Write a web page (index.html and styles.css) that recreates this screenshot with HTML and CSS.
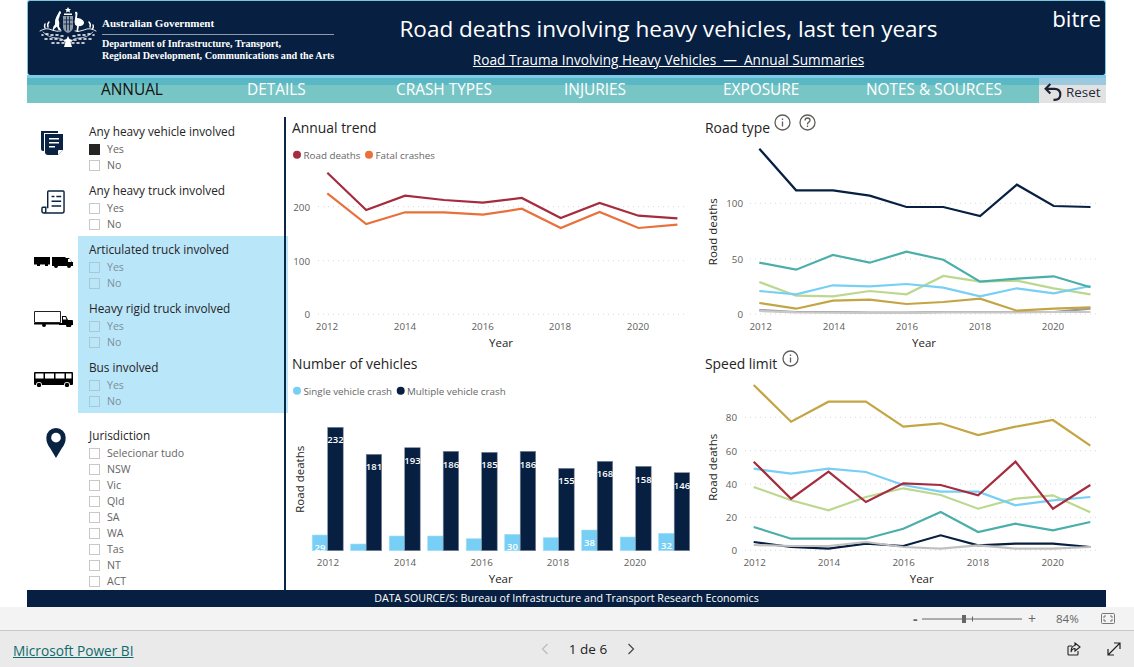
FILE: index.html
```html
<!DOCTYPE html>
<html lang="en">
<head>
<meta charset="utf-8">
<title>Road deaths involving heavy vehicles</title>
<link rel="stylesheet" href="styles.css">
</head>
<body>
<main class="canvas">
  <header class="banner">
    <div class="gov">
      <svg class="crest" viewBox="0 0 58 44" width="58" height="44">
        <g fill="#fff">
          <path d="M29 0l1 2h2l-1.500 1.500l.5 2l-2-1l-2 1l.5-2L26 2h2z"/>
          <path d="M25 6.500h8v1.500h-8z"/>
          <path d="M24 9h10v11q0 4-5 6q-5-2-5-6z" fill-opacity=".55"/>
          <path d="M24.500 13h9M24.500 17h9M27.500 9.500v14M30.500 9.500v14" stroke="#071f41" stroke-width=".8" fill="none"/>
          <path d="M20.500 4q1.500 0 1.500 1.500q0 1.500-1 2q-.5 3-1.500 5q1.500 4 .5 7l2.500 4l-3-.5l-1.500-3.500q-3 2-4 5q-1-4 2-7q-.5-5 1.500-8z"/>
          <path d="M36 5q2-1 2.500 1l-.5 5q4 0 6.500 3q1.500 2-.5 4q-2 1.500-4 1l-1 5l1.500 1h-3l.5-6q-2.500-1-2.500-4l1-7z"/>
        </g>
        <g fill="none" stroke="#fff" stroke-linecap="round">
          <path d="M6 17q-1 2 0 4M10 15q-2 2-1 5M50 15q2 2 1 5M54 18q1 2-.500 4" stroke-width="1.500"/>
          <path d="M1 24q6-4 12-1q5 2 9 1M57 24q-6-4-12-1q-5 2-9 1" stroke-width=".9"/>
          <path d="M3 28h1M7 27h2M12 28h2M17 28h2M22 29h2M34 29h2M39 28h2M44 28h2M49 27h2M54 28h1M6 32h2M11 32h2M16 32h2M21 33h2M35 33h2M40 32h2M45 32h2M50 32h2M13 36h2M18 36h2M23 36h2M33 36h2M38 36h2M43 36h2" stroke-width="1.600"/>
          <path d="M4 25q6 6 14 6q6 0 8 4M54 25q-6 6-14 6q-6 0-8 4" stroke-width=".7"/>
        </g>
        <path d="M29 29l1.500 3l3 1l-2 2l1.500 5h-8l1.500-5l-2-2l3-1z" fill="#fff"/>
      </svg>
      <div class="gov-text">
        <div class="gov-name">Australian Government</div>
        <div class="gov-dept">Department of Infrastructure, Transport,<br>Regional Development, Communications and the Arts</div>
      </div>
    </div>
    <div class="heading">
      <h1>Road deaths involving heavy vehicles, last ten years</h1>
      <p class="subtitle">Road Trauma Involving Heavy Vehicles &nbsp;—&nbsp; Annual Summaries</p>
    </div>
    <div class="brand">bitre</div>
  </header>

  <nav class="nav">
    <div class="tabs">
      <span class="tab tab-active">ANNUAL</span>
      <span class="tab">DETAILS</span>
      <span class="tab">CRASH TYPES</span>
      <span class="tab">INJURIES</span>
      <span class="tab">EXPOSURE</span>
      <span class="tab">NOTES &amp; SOURCES</span>
    </div>
    <div class="reset">
      <svg viewBox="0 0 20 20" width="21" height="21" class="reset-icon"><path d="M7 2L2.500 6.500L7 11M3 6.500H11Q16.500 6.500 16.500 12Q16.500 17 11 17H10" fill="none" stroke="#1a2233" stroke-width="2"/></svg>
      <span class="reset-label">Reset</span>
    </div>
  </nav>

  <div class="body">
    <aside class="sidebar">
      <section class="group">
        <div class="icon-cell icon-doc">
          <svg viewBox="0 0 24 26" width="24" height="26"><path d="M1 1h17v2H4v18H3q-2 0-2-2z" fill="#0a2343"/><path d="M5 4h18v16l-5 5H8q-3 0-3-3z" fill="#0a2343"/><path d="M9 8h10v1.500H9zM9 12h10v1.500H9zM9 16h6v1.500H9z" fill="#fff"/><path d="M18 25v-4q0-1 1-1h4z" fill="#fff"/></svg>
        </div>
        <div class="slicer">
          <div class="slicer-title">Any heavy vehicle involved</div>
          <div class="opt"><i class="box box-on"></i>Yes</div>
          <div class="opt"><i class="box"></i>No</div>
        </div>
      </section>
      <section class="group">
        <div class="icon-cell icon-paper">
          <svg viewBox="0 0 25 25" width="24" height="24"><path d="M7 19V2q0-1 1-1h15q1 0 1 1v20q0 2-2 2H3q-2 0-2-2v-3q0-1 1-1h3v4q0 2-2 2" fill="none" stroke="#0a2343" stroke-width="1.500"/><path d="M11 6h3v1.500h-3zM16 6h5v1.500h-5zM11 11h10v1.500H11zM11 16h10v1.500H11z" fill="#0a2343"/></svg>
        </div>
        <div class="slicer">
          <div class="slicer-title">Any heavy truck involved</div>
          <div class="opt"><i class="box"></i>Yes</div>
          <div class="opt"><i class="box"></i>No</div>
        </div>
      </section>
      <section class="group group-first">
        <div class="icon-cell icon-road">
          <svg viewBox="0 0 39 11" width="39" height="11"><path d="M0 0h16v7.500H14v1.500h-3v-1.500H6v1.500H3v-1.500H0zM18 0h13l1 1h3l3 4h1v4h-2a2 2 0 0 1-4 0H24a2 2 0 0 1-4 0h-2z"/><path d="M34 2h2l1.500 3H34z" fill="#fff"/></svg>
        </div>
        <div class="slicer slicer-hl">
          <div class="slicer-title">Articulated truck involved</div>
          <div class="opt"><i class="box"></i>Yes</div>
          <div class="opt"><i class="box"></i>No</div>
        </div>
      </section>
      <section class="group">
        <div class="icon-cell icon-road-2">
          <svg viewBox="0 0 39 16" width="39" height="16"><path d="M.500.500h26v11H.500z" fill="#fff" stroke="#222"/><path d="M0 12h25v1.500H0z"/><path d="M28 5h4l2 4h4q1 0 1 1v4h-2a2.500 2.500 0 0 1-5 0H25v-2h3z"/><circle cx="10" cy="14" r="2"/><circle cx="35.500" cy="14" r="2"/><path d="M29 6h2.500l1 2.500H29z" fill="#fff"/></svg>
        </div>
        <div class="slicer slicer-hl">
          <div class="slicer-title">Heavy rigid truck involved</div>
          <div class="opt"><i class="box"></i>Yes</div>
          <div class="opt"><i class="box"></i>No</div>
        </div>
      </section>
      <section class="group group-last">
        <div class="icon-cell icon-road-3">
          <svg viewBox="0 0 39 15" width="39" height="15"><path d="M1 0h37q1 0 1 1v11q0 1-1 1h-2a3 3 0 0 0-6 0H8a3 3 0 0 0-6 0H1q-1 0-1-1V1q0-1 1-1z"/><path d="M1.500 1.500h8v5h-8zM11 1.500h9v5h-9zM21.500 1.500h9v5h-9zM32 1.500h5.500v5H32z" fill="#fff"/><circle cx="5" cy="13" r="2.200"/><circle cx="33" cy="13" r="2.200"/></svg>
        </div>
        <div class="slicer slicer-hl">
          <div class="slicer-title">Bus involved</div>
          <div class="opt"><i class="box"></i>Yes</div>
          <div class="opt"><i class="box"></i>No</div>
        </div>
      </section>
      <section class="group group-juris">
        <div class="icon-cell icon-pin">
          <svg viewBox="0 0 20 31" width="20" height="30"><path d="M10 0a10 10 0 0 1 10 10q0 6-4 11l-6 10l-6-10q-4-5-4-11a10 10 0 0 1 10-10z" fill="#0a2343"/><circle cx="10" cy="10" r="5" fill="#fff"/></svg>
        </div>
        <div class="slicer">
          <div class="slicer-title">Jurisdiction</div>
          <div class="opt"><i class="box"></i>Selecionar tudo</div>
          <div class="opt"><i class="box"></i>NSW</div>
          <div class="opt"><i class="box"></i>Vic</div>
          <div class="opt"><i class="box"></i>Qld</div>
          <div class="opt"><i class="box"></i>SA</div>
          <div class="opt"><i class="box"></i>WA</div>
          <div class="opt"><i class="box"></i>Tas</div>
          <div class="opt"><i class="box"></i>NT</div>
          <div class="opt"><i class="box"></i>ACT</div>
        </div>
      </section>
    </aside>

    <div class="charts">
      <section class="chart">
        <h2 class="chart-title">Annual trend</h2>
        <svg class="plot" viewBox="288 139 413 214" width="413" height="214">
          <circle cx="297" cy="154.700" r="4" fill="#a52c3e"/><text class="legend" x="303.500" y="155">Road deaths</text>
          <circle cx="369" cy="154.700" r="4" fill="#e8703a"/><text class="legend" x="375.500" y="155">Fatal crashes</text>
          <path class="grid" d="M318 206.700H684M318 260.700H684M318 314.300H684"/>
          <text class="axis end" x="310" y="207">200</text><text class="axis end" x="310" y="261">100</text><text class="axis end" x="310" y="314.500">0</text>
          <polyline class="line" stroke="#a52c3e" points="327.300,172.700 366.200,210 405.100,195.700 444,200 482.900,202.700 521.800,198 560.700,218 599.600,203 638.500,215.700 677.400,218.300"/>
          <polyline class="line" stroke="#e8703a" points="327.300,193.300 366.200,224 405.100,212.300 444,212.300 482.900,214.700 521.800,208.700 560.700,228 599.600,212 638.500,228 677.400,224.700"/>
          <text class="axis mid" x="327" y="326">2012</text><text class="axis mid" x="405" y="326">2014</text><text class="axis mid" x="482.700" y="326">2016</text><text class="axis mid" x="560" y="326">2018</text><text class="axis mid" x="638" y="326">2020</text>
          <text class="axis-title mid" x="501" y="342">Year</text>
        </svg>
      </section>

      <section class="chart chart-right">
        <h2 class="chart-title">Road type
          <svg class="help help-first" viewBox="0 0 17 17" width="17" height="17"><circle cx="8.500" cy="8.500" r="7.500"/><path d="M8.500 7.500V12.500M8.500 4.500V6"/></svg>
          <svg class="help help-next" viewBox="0 0 17 17" width="17" height="17"><circle cx="8.500" cy="8.500" r="7.500"/><path d="M6 6.500Q6.200 4 8.500 4Q11 4 11 6.200Q11 7.600 9.500 8.300Q8.500 8.800 8.500 10.500M8.500 11.500V13"/></svg>
        </h2>
        <svg class="plot" viewBox="701 139 405 214" width="405" height="214">
          <path class="grid" d="M750 203.300H1097M750 259H1097M750 314H1097"/>
          <text class="axis end" x="743" y="203.500">100</text><text class="axis end" x="743" y="259.500">50</text><text class="axis end" x="743" y="314.500">0</text>
          <text class="axis-title mid" transform="translate(712 231.700) rotate(-90)">Road deaths</text>
          <polyline class="line" stroke="#999" points="759.300,310 796.100,312 832.900,312 869.700,312.700 906.500,312.700 943.300,312 980.100,312 1016.900,312 1053.700,312 1090.500,308.700"/>
          <polyline class="line" stroke="#c8c8c8" points="759.300,311 796.100,312.300 832.900,312.700 869.700,313 906.500,313 943.300,312.300 980.100,312.300 1016.900,312.300 1053.700,312 1090.500,312"/>
          <polyline class="line" stroke="#c4a544" points="759.300,303 796.100,308.700 832.900,300.700 869.700,299.700 906.500,304 943.300,302 980.100,298.700 1016.900,310.700 1053.700,308.700 1090.500,307.300"/>
          <polyline class="line" stroke="#bcd88e" points="759.300,282 796.100,295.700 832.900,296.300 869.700,291 906.500,294.300 943.300,276 980.100,281.700 1016.900,280.700 1053.700,288.300 1090.500,294.300"/>
          <polyline class="line" stroke="#77cff5" points="759.300,291 796.100,294.300 832.900,285.300 869.700,286.300 906.500,284 943.300,287.700 980.100,296.300 1016.900,288.300 1053.700,293.300 1090.500,286"/>
          <polyline class="line" stroke="#4aafa9" points="759.300,262.700 796.100,269.700 832.900,255 869.700,262.700 906.500,251.700 943.300,259.700 980.100,281.700 1016.900,278.700 1053.700,276.300 1090.500,287.300"/>
          <polyline class="line" stroke="#071f41" points="759.300,148.700 796.100,190.300 832.900,190.300 869.700,195.700 906.500,207 943.300,207 980.100,216 1016.900,184.700 1053.700,206 1090.500,207"/>
          <text class="axis mid" x="760.700" y="326">2012</text><text class="axis mid" x="834" y="326">2014</text><text class="axis mid" x="907" y="326">2016</text><text class="axis mid" x="980" y="326">2018</text><text class="axis mid" x="1053" y="326">2020</text>
          <text class="axis-title mid" x="924" y="342">Year</text>
        </svg>
      </section>

      <section class="chart">
        <h2 class="chart-title">Number of vehicles</h2>
        <svg class="plot" viewBox="288 375 413 215" width="413" height="215">
          <circle cx="297" cy="390.700" r="4" fill="#77cff5"/><text class="legend" x="303.500" y="391">Single vehicle crash</text>
          <circle cx="400.700" cy="390.700" r="4" fill="#071f41"/><text class="legend" x="407" y="391">Multiple vehicle crash</text>
          <text class="axis-title mid" transform="translate(299 479.300) rotate(-90)">Road deaths</text>
          <g class="bars-light">
            <rect x="312.200" y="535" width="15.500" height="15.700"/><rect x="350.700" y="544" width="15.500" height="6.700"/><rect x="389.200" y="536" width="15.500" height="14.700"/><rect x="427.700" y="536" width="15.500" height="14.700"/><rect x="466.200" y="538.700" width="15.500" height="12"/><rect x="504.700" y="534.300" width="15.500" height="16.400"/><rect x="543.200" y="537.700" width="15.500" height="13"/><rect x="581.700" y="530" width="15.500" height="20.700"/><rect x="620.200" y="537" width="15.500" height="13.700"/><rect x="658.700" y="533.300" width="15.500" height="17.400"/>
          </g>
          <g class="bars-dark">
            <rect x="327.700" y="427.300" width="15.500" height="123.400"/><rect x="366.200" y="454.300" width="15.500" height="96.400"/><rect x="404.700" y="447.700" width="15.500" height="103"/><rect x="443.200" y="451.300" width="15.500" height="99.400"/><rect x="481.700" y="452.300" width="15.500" height="98.400"/><rect x="520.200" y="451.300" width="15.500" height="99.400"/><rect x="558.700" y="468.300" width="15.500" height="82.400"/><rect x="597.200" y="461.300" width="15.500" height="89.400"/><rect x="635.700" y="466.300" width="15.500" height="84.400"/><rect x="674.200" y="472.700" width="15.500" height="78"/>
          </g>
          <g class="bar-label">
            <text x="335.500" y="439">232</text><text x="374" y="466">181</text><text x="412.500" y="460">193</text><text x="451" y="464">186</text><text x="489.500" y="464">185</text><text x="528" y="464">186</text><text x="566.500" y="480">155</text><text x="605" y="473">168</text><text x="643.500" y="479">158</text><text x="682" y="485">146</text>
            <text x="320" y="547">29</text><text x="512.500" y="546">30</text><text x="589.500" y="542">38</text><text x="666.500" y="545">32</text>
          </g>
          <text class="axis mid" x="328" y="562">2012</text><text class="axis mid" x="405" y="562">2014</text><text class="axis mid" x="481.700" y="562">2016</text><text class="axis mid" x="558" y="562">2018</text><text class="axis mid" x="635" y="562">2020</text>
          <text class="axis-title mid" x="500.700" y="578">Year</text>
        </svg>
      </section>

      <section class="chart chart-right">
        <h2 class="chart-title">Speed limit
          <svg class="help help-first help-wide" viewBox="0 0 17 17" width="17" height="17"><circle cx="8.500" cy="8.500" r="7.500"/><path d="M8.500 7.500V12.500M8.500 4.500V6"/></svg>
        </h2>
        <svg class="plot" viewBox="701 375 405 215" width="405" height="215">
          <path class="grid" d="M745 417.300H1097M745 450.700H1097M745 484H1097M745 517.300H1097M745 550.300H1097"/>
          <text class="axis end" x="737" y="417.500">80</text><text class="axis end" x="737" y="451">60</text><text class="axis end" x="737" y="484.500">40</text><text class="axis end" x="737" y="517.500">20</text><text class="axis end" x="737" y="550.500">0</text>
          <text class="axis-title mid" transform="translate(712 467.300) rotate(-90)">Road deaths</text>
          <polyline class="line" stroke="#071f41" points="753.700,542 791.100,547 828.500,548.700 865.900,543.700 903.300,546 940.700,535.300 978.100,545.300 1015.500,543.700 1052.900,543.700 1090.300,547"/>
          <polyline class="line" stroke="#c0c0c0" points="753.700,545 791.100,546 828.500,546 865.900,542 903.300,547 940.700,548.700 978.100,545.300 1015.500,548.700 1052.900,548.700 1090.300,547"/>
          <polyline class="line" stroke="#4aafa9" points="753.700,527 791.100,538.700 828.500,538.700 865.900,538.700 903.300,528.700 940.700,512 978.100,532 1015.500,523.700 1052.900,530.300 1090.300,522"/>
          <polyline class="line" stroke="#bcd88e" points="753.700,487 791.100,500.300 828.500,510.300 865.900,497 903.300,488.300 940.700,495 978.100,508.700 1015.500,498.700 1052.900,495.300 1090.300,512.300"/>
          <polyline class="line" stroke="#77cff5" points="753.700,468.700 791.100,473.700 828.500,468.700 865.900,472 903.300,485 940.700,491.700 978.100,491.700 1015.500,505.300 1052.900,500.300 1090.300,497"/>
          <polyline class="line" stroke="#a52c3e" points="753.700,461.700 791.100,498.700 828.500,471.700 865.900,502 903.300,483.300 940.700,485 978.100,495.300 1015.500,461.700 1052.900,508.700 1090.300,485"/>
          <polyline class="line" stroke="#c4a544" points="753.700,385 791.100,421.700 828.500,401.700 865.900,401.700 903.300,426.700 940.700,423.300 978.100,435 1015.500,426.700 1052.900,420 1090.300,445.700"/>
          <text class="axis mid" x="754.700" y="562">2012</text><text class="axis mid" x="829" y="562">2014</text><text class="axis mid" x="903.700" y="562">2016</text><text class="axis mid" x="978" y="562">2018</text><text class="axis mid" x="1052.700" y="562">2020</text>
          <text class="axis-title mid" x="921.700" y="578">Year</text>
        </svg>
      </section>
    </div>
  </div>

  <div class="source">DATA SOURCE/S: Bureau of Infrastructure and Transport Research Economics</div>
</main>

<div class="zoombar">
  <span class="zoom-minus">-</span>
  <svg class="zoom-slider" viewBox="0 0 100 10" width="100" height="10"><path d="M0 5H100" stroke="#666"/><path d="M50.500 2.500V7.500" stroke="#666"/><rect x="40" y="1" width="4" height="8" fill="#666"/></svg>
  <span class="zoom-plus">+</span>
  <span class="zoom-value">84%</span>
  <svg class="zoom-fit" viewBox="0 0 14 11" width="14" height="11"><rect x=".500" y=".500" width="13" height="10" rx="1" fill="none" stroke="#777"/><path d="M3 5V3H5M9 3H11V5M11 6V8H9M5 8H3V6" fill="none" stroke="#777"/></svg>
</div>

<footer class="footer">
  <a class="pbi">Microsoft Power BI</a>
  <div class="pager">
    <svg viewBox="0 0 8 12" width="8" height="12"><path d="M6.500 1L1.500 6L6.500 11" fill="none" stroke="#bbb" stroke-width="1.200"/></svg>
    <span class="pager-text">1 de 6</span>
    <svg viewBox="0 0 8 12" width="8" height="12"><path d="M1.500 1L6.500 6L1.500 11" fill="none" stroke="#444" stroke-width="1.200"/></svg>
  </div>
  <div class="foot-actions">
    <svg viewBox="0 0 14 14" width="14" height="14"><path d="M11 9v3q0 1-1 1H2q-1 0-1-1V5q0-1 1-1h3M8 1l5 4l-5 4V6.500Q5 6.500 4 10Q4 4 8 3.500z" fill="none" stroke="#222" stroke-width="1.100"/></svg>
    <svg viewBox="0 0 14 14" width="14" height="14"><path d="M1 13L13 1M7 1H13V7M1 7V13H7" fill="none" stroke="#222" stroke-width="1.200"/></svg>
  </div>
</footer>
</body>
</html>
```
FILE: styles.css
```css
* { box-sizing: border-box; }
html, body { margin: 0; padding: 0; }
body {
  width: 1134px;
  height: 667px;
  overflow: hidden;
  background: #fff;
  font-family: "Open Sans", "Noto Sans", sans-serif;
  color: #222;
}

.canvas {
  height: 607px;
  padding: 0 28px 0 27px;
  display: flex;
  flex-direction: column;
}

/* banner */
.banner {
  height: 75px;
  background: #071f41;
  border-top: 1px solid #7cc7dc;
  border-right: 1px solid #7cc7dc;
  border-left: 1px solid #7cc7dc;
  border-radius: 3px;
  display: grid;
  grid-template-columns: 344px 1fr 140px;
  color: #fff;
}
.gov { display: flex; padding: 6px 0 0 11px; }
.crest { flex: none; }
.gov-text { margin-left: 5px; padding-top: 9px; font-family: "Liberation Serif", serif; font-weight: 700; width: 232px; }
.gov-name { font-size: 11px; line-height: 15px; padding-bottom: 3px; border-bottom: 1px solid #8c9ab0; }
.gov-dept { font-size: 10.150px; line-height: 12px; padding-top: 3px; white-space: nowrap; }
.heading { text-align: center; white-space: nowrap; }
.heading h1 { margin: 11px 0 0; font-size: 22.550px; line-height: 34px; font-weight: 400; }
.subtitle { margin: 4px 0 0; font-size: 13.650px; line-height: 20px; text-decoration: underline; }
.brand { text-align: right; padding: 2px 4px 0 0; font-size: 22.300px; line-height: 32px; }

/* nav */
.nav {
  height: 28px;
  display: flex;
  border-top: 3px solid #7ccbe8;
  background: linear-gradient(#5ab8c5 0 7px, #78c5c6 7px);
}
.tabs {
  width: 1012px;
  display: grid;
  grid-template-columns: 146px 149px 168px 159px 143px 1fr;
  padding: 0 0 0 74px;
  font-size: 15.400px;
  line-height: 24px;
  color: #fff;
  white-space: nowrap;
}
.tab-active { color: #111; }
.reset {
  width: 67px;
  display: flex;
  align-items: flex-end;
  background: linear-gradient(#9cc9dd 0 7px, #e2e2e2 7px);
  font-size: 13.400px;
  line-height: 20px;
  color: #222a3a;
  padding: 0 0 0 4px;
  gap: 2px;
}
.reset-icon { margin-bottom: 0; }
.reset-label { margin-bottom: 1px; }

/* body */
.body { flex: 1; display: flex; min-height: 0; }

.sidebar { position: relative; width: 261px; flex: none; padding-top: 19px; overflow: hidden; }
.sidebar::after {
  content: "";
  position: absolute;
  top: 14px;
  bottom: 0;
  right: 2px;
  width: 2px;
  background: #0d2748;
}
.group { display: flex; }
.icon-cell { width: 51px; flex: none; display: flex; justify-content: center; align-items: flex-start; }
.icon-doc { padding: 8px 1px 0 0; }
.icon-paper { padding: 9px 0 0 0; }
.icon-road { padding: 19px 0 0 1px; }
.icon-road-2 { padding: 12px 0 0 1px; }
.icon-road-3 { padding: 14px 0 0 1px; }
.icon-pin { padding: 2px 0 0 6px; }
.slicer { flex: 1; padding: 0 0 8px 11px; }
.slicer-hl { background: #bae6fa; }
.group-first .slicer { padding-top: 4px; }
.group-first .icon-road { padding-top: 21px; }
.group-first { margin-top: -4px; }
.group-last .slicer { padding-bottom: 4px; }
.group-juris { margin-top: 13px; }
.slicer-title { font-size: 11.800px; line-height: 18px; padding-bottom: 1px; color: #252423; white-space: nowrap; }
.opt { display: flex; align-items: center; height: 16px; font-size: 10.600px; color: #666; white-space: nowrap; }
.box { width: 11px; height: 11px; margin-right: 7px; border: 1px solid #c8c8c8; flex: none; }
.box-on { background: #252423; border-color: #252423; }
.slicer-hl .box { border-color: #aac8d4; }
.slicer-hl .opt { color: #7d8f99; }

/* charts */
.charts {
  flex: 1;
  padding-top: 14px;
  display: grid;
  grid-template-columns: 413px 405px;
  grid-template-rows: 236px 237px;
}
.chart { display: flex; flex-direction: column; min-width: 0; }
.chart-title {
  margin: 0;
  height: 22px;
  padding-left: 4px;
  display: flex;
  align-items: center;
  font-size: 13.900px;
  line-height: 22px;
  font-weight: 400;
  color: #252423;
}
.help { fill: none; stroke: #605e5c; stroke-width: 1.300; align-self: flex-start; margin-top: -3px; flex: none; }
.help-first { margin-left: 4px; }
.help-next { margin-left: 8px; }
.help-wide { margin-left: 5px; }
.plot { display: block; overflow: visible; }

.grid { fill: none; stroke: #d9d9d9; stroke-dasharray: 1 4; }
.line { fill: none; stroke-width: 2.200; stroke-linejoin: miter; }
.legend { font-size: 9.800px; fill: #666; dominant-baseline: central; }
.axis { font-size: 9.800px; fill: #605e5c; dominant-baseline: central; }
.axis-title { font-size: 11.500px; fill: #252423; dominant-baseline: central; }
.end { text-anchor: end; }
.mid { text-anchor: middle; }
.bars-light rect { fill: #77cff5; stroke: #a6e0f8; stroke-width: .6; }
.bars-dark rect { fill: #071f41; stroke: #7e8b9e; stroke-width: .6; }
.bar-label text { font-size: 9.500px; font-weight: 600; fill: #fff; text-anchor: middle; dominant-baseline: central; }

.source {
  height: 17px;
  flex: none;
  background: #071f41;
  color: #fff;
  text-align: center;
  font-size: 10.660px;
  line-height: 16px;
  white-space: nowrap;
}

/* browser chrome */
.zoombar {
  height: 24px;
  background: #f3f3f3;
  border-bottom: 1px solid #c8c8c8;
  display: flex;
  align-items: center;
  padding-left: 913px;
  color: #666;
}
.zoom-minus { width: 9px; font-size: 14px; font-weight: 700; line-height: 20px; }
.zoom-slider { flex: none; }
.zoom-plus { width: 14px; margin-left: 6px; font-size: 14px; line-height: 20px; }
.zoom-value { margin-left: 14px; width: 23px; font-size: 11.500px; white-space: nowrap; }
.zoom-fit { margin-left: 22px; flex: none; }

.footer {
  height: 36px;
  padding-top: 3px;
  background: #eaeaea;
  display: grid;
  grid-template-columns: 540px 96px 1fr;
  align-items: center;
}
.pbi {
  padding-left: 13px;
  font-size: 13.700px;
  color: #0f6a6a;
  text-decoration: underline;
  white-space: nowrap;
}
.pager { display: flex; align-items: center; justify-content: space-between; padding: 0 1px; margin-top: -3px; }
.pager-text { font-size: 13.500px; color: #222; white-space: nowrap; }
.foot-actions { display: flex; justify-content: flex-end; gap: 26px; padding-right: 13px; margin-top: -3px; }
```
